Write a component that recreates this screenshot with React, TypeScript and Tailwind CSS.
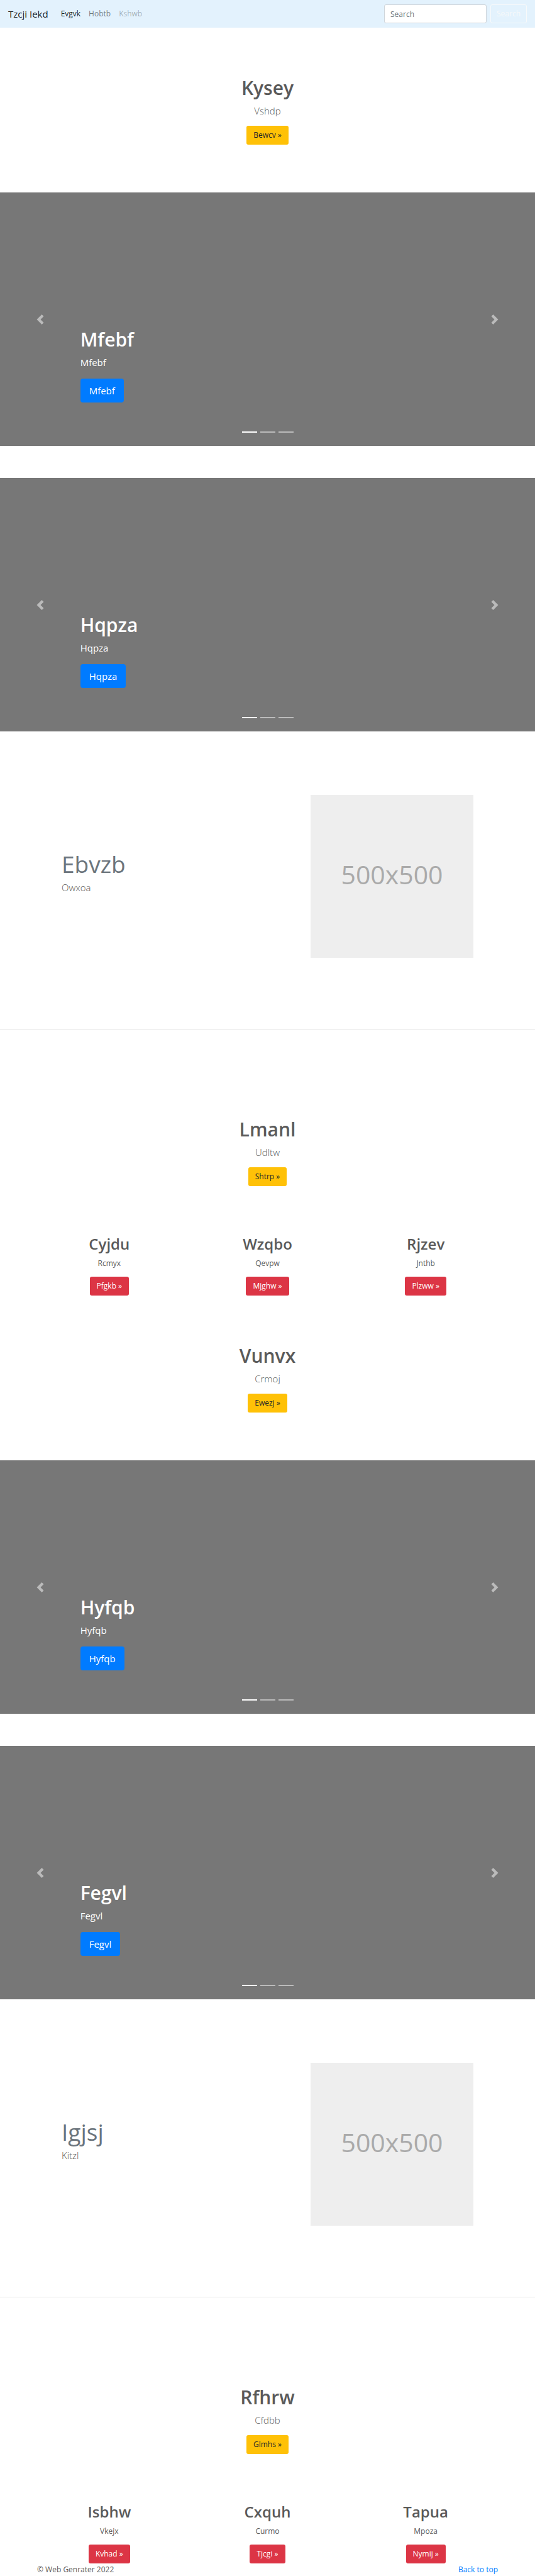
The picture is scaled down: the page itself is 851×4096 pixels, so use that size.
import React from "react";

type Item = { title: string; text: string; action: string };

function Navbar() {
  return (
    <nav className="flex h-11 items-center bg-[#e3f2fd] px-[13px]">
      <a href="#" className="mr-5 text-[15px] text-black/90">Tzcji Iekd</a>
      <ul className="flex grow gap-[13px]">
        <li><a href="#" className="text-black/90">Evgvk</a></li>
        <li><a href="#" className="text-black/50">Hobtb</a></li>
        <li><span className="text-black/30">Kshwb</span></li>
      </ul>
      <form className="flex gap-[6px]" onSubmit={(e) => e.preventDefault()}>
        <input
          type="search"
          aria-label="Search"
          placeholder="Search"
          className="h-[30px] w-[163px] rounded-[3px] border border-[#ced4da] bg-white px-[9px] text-[#495057] placeholder:text-[#6c757d]"
        />
        <button
          type="submit"
          className="h-[30px] rounded-[3px] border border-[#f8f9fa] px-[9px] text-[#f8f9fa]"
        >
          Search
        </button>
      </form>
    </nav>
  );
}

function Intro({ title, text, action }: Item) {
  return (
    <header className="flex flex-col items-center">
      <h2 className="mb-[5px] text-[30px] leading-[38px] font-semibold">{title}</h2>
      <p className="mb-3 text-[15px] leading-6 font-light">{text}</p>
      <a href="#" className="flex h-[30px] items-center rounded-[3px] bg-[#ffc107] px-[11px] text-[#212529]">
        {action} »
      </a>
    </header>
  );
}

function Carousel({ name }: { name: string }) {
  return (
    <section className="relative flex h-[403px] flex-col items-start justify-end bg-[#777] px-[15%] pb-[69px] text-white">
      <h2 className="mb-[5px] text-[30px] leading-[38px] font-semibold">{name}</h2>
      <p className="mb-[14px] text-[15px] leading-6">{name}</p>
      <a href="#" className="flex h-[38px] items-center rounded-[4px] bg-[#007bff] px-[14px] text-[15px]">
        {name}
      </a>
      <button
        type="button"
        aria-label="Previous"
        className="absolute inset-y-0 left-0 flex w-[15%] items-center justify-center opacity-50"
      >
        <svg viewBox="0 0 8 8" className="size-4 fill-white">
          <path d="M5.25 0l-4 4 4 4 1.5-1.5L4.25 4l2.5-2.5L5.25 0z" />
        </svg>
      </button>
      <button
        type="button"
        aria-label="Next"
        className="absolute inset-y-0 right-0 flex w-[15%] items-center justify-center opacity-50"
      >
        <svg viewBox="0 0 8 8" className="size-4 fill-white">
          <path d="M2.75 0l-1.5 1.5L3.75 4l-2.5 2.5L2.75 8l4-4-4-4z" />
        </svg>
      </button>
      <div className="absolute inset-x-0 bottom-[21px] mx-auto flex w-fit gap-[5px]">
        <button type="button" aria-label="Slide 1" className="h-[2px] w-6 bg-white" />
        <button type="button" aria-label="Slide 2" className="h-[2px] w-6 bg-white/50" />
        <button type="button" aria-label="Slide 3" className="h-[2px] w-6 bg-white/50" />
      </div>
    </section>
  );
}

function Feature({ title, text }: { title: string; text: string }) {
  return (
    <section className="flex items-center justify-between border-b border-[#e6e6e6] px-[98px] pt-[101px] pb-[113px]">
      <div className="pb-[14px]">
        <h2 className="mb-[2px] text-[37px] leading-[47px] text-[#6c757d]">{title}</h2>
        <p className="text-[15px] leading-6 font-light">{text}</p>
      </div>
      <div className="flex size-[259px] items-center justify-center bg-[#eee] pb-[6px] text-[41px] text-[#aaa]">
        500x500
      </div>
    </section>
  );
}

function Columns({ items }: { items: Item[] }) {
  return (
    <div className="grid grid-cols-3 px-12 pt-[77px]">
      {items.map((item) => (
        <article key={item.title} className="flex flex-col items-center">
          <h3 className="mb-[6px] text-[24px] leading-[30px] font-semibold">{item.title}</h3>
          <p className="mb-3 leading-[19px]">{item.text}</p>
          <a href="#" className="flex h-[30px] items-center rounded-[3px] bg-[#dc3545] px-[11px] text-white">
            {item.action} »
          </a>
        </article>
      ))}
    </div>
  );
}

const firstColumns: Item[] = [
  { title: "Cyjdu", text: "Rcmyx", action: "Pfgkb" },
  { title: "Wzqbo", text: "Qevpw", action: "Mjghw" },
  { title: "Rjzev", text: "Jnthb", action: "Plzww" },
];

const secondColumns: Item[] = [
  { title: "Isbhw", text: "Vkejx", action: "Kvhad" },
  { title: "Cxquh", text: "Curmo", action: "Tjcgi" },
  { title: "Tapua", text: "Mpoza", action: "Nymij" },
];

export default function App() {
  return (
    <div className="bg-white font-['Open_Sans',sans-serif] text-[12px] text-[#5a5a5a]">
      <Navbar />
      <main>
        <div className="pt-[77px] pb-[76px]">
          <Intro title="Kysey" text="Vshdp" action="Bewcv" />
        </div>
        <div className="flex flex-col gap-[51px]">
          <Carousel name="Mfebf" />
          <Carousel name="Hqpza" />
        </div>
        <Feature title="Ebvzb" text="Owxoa" />
        <div className="pt-[140px]">
          <Intro title="Lmanl" text="Udltw" action="Shtrp" />
          <Columns items={firstColumns} />
        </div>
        <div className="pt-[77px] pb-[76px]">
          <Intro title="Vunvx" text="Crmoj" action="Ewezj" />
        </div>
        <div className="flex flex-col gap-[51px]">
          <Carousel name="Hyfqb" />
          <Carousel name="Fegvl" />
        </div>
        <Feature title="Igjsj" text="Kitzl" />
        <div className="pt-[140px]">
          <Intro title="Rfhrw" text="Cfdbb" action="Glmhs" />
          <Columns items={secondColumns} />
        </div>
      </main>
      <footer className="flex justify-between px-[59px] leading-5">
        <p>© Web Genrater 2022</p>
        <a href="#" className="text-[#007bff]">Back to top</a>
      </footer>
    </div>
  );
}
